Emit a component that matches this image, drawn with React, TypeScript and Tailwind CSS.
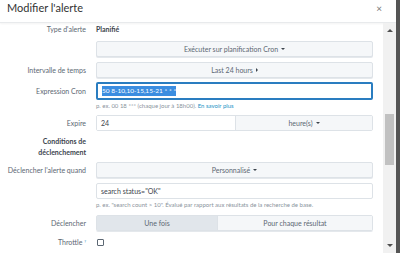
const font = { fontFamily: "Lato, 'Open Sans', sans-serif" };

function Label({ children, bold }: { children: React.ReactNode; bold?: boolean }) {
  return (
    <div className={`w-[86px] shrink-0 text-right text-[7px] ${bold ? "font-bold text-[#3c444d]" : "text-[#5c6773]"}`}>
      {children}
    </div>
  );
}

function Caret({ right }: { right?: boolean }) {
  return right ? (
    <span className="ml-[3px] inline-block h-0 w-0 border-y-[2px] border-l-[2.5px] border-y-transparent border-l-[#3c444d]" />
  ) : (
    <span className="ml-[3px] inline-block h-0 w-0 border-x-[2px] border-t-[2.5px] border-x-transparent border-t-[#3c444d]" />
  );
}

function Btn({ children, right }: { children: React.ReactNode; right?: boolean }) {
  return (
    <div className="flex h-[16px] w-[277px] items-center justify-center rounded-[2px] border border-[#dde2e7] bg-[#f5f7f9] text-[7px] text-[#5c6773] shadow-[0_1px_0_#e4e8ec]">
      {children}
      <Caret right={right} />
    </div>
  );
}

export default function App() {
  return (
    <div className="flex h-[253px] w-[400px] overflow-hidden bg-[#555]" style={font}>
      <div className="flex w-[396px] flex-col bg-white">
        {/* header */}
        <div className="flex h-[23px] shrink-0 items-start justify-between border-b border-[#e8eaec] px-[7px] pt-[1px] shadow-[0_1px_2px_rgba(0,0,0,0.05)]">
          <div className="text-[11px] leading-[13px] text-[#333]">Modifier l'alerte</div>
          <div className="mr-[7px] text-[10px] leading-[14px] text-[#777]">×</div>
        </div>

        <div className="flex min-h-0 flex-1">
          {/* body */}
          <div className="flex w-[383px] flex-col">
            <div className="flex h-[12px] items-center gap-[10px]">
              <Label>Type d'alerte</Label>
              <div className="text-[7px] font-bold text-[#3c444d]">Planifié</div>
            </div>

            <div className="mt-[6px] flex items-center gap-[10px]">
              <Label>{""}</Label>
              <Btn>Exécuter sur planification Cron</Btn>
            </div>

            <div className="mt-[5px] flex items-center gap-[10px]">
              <Label>Intervalle de temps</Label>
              <Btn right>Last 24 hours</Btn>
            </div>

            <div className="mt-[4px] flex items-center gap-[10px]">
              <Label>Expression Cron</Label>
              <div className="flex h-[18px] w-[277px] items-center rounded-[2px] border-2 border-[#2a7dc0] px-[4px] text-[6.5px]">
                <span className="bg-[#3b8de0] text-white">50 8-10,10-15,15-21 * * *</span>
              </div>
            </div>
            <div className="flex h-[10px] items-center gap-[10px]">
              <Label>{""}</Label>
              <div className="text-[6px] text-[#8a939c]">
                p. ex. 00 18 *** (chaque jour à 18h00). <span className="text-[#1e93c6]">En savoir plus</span>
              </div>
            </div>

            <div className="mt-[5px] flex items-center gap-[10px]">
              <Label>Expire</Label>
              <div className="flex h-[16px] w-[277px] rounded-[2px] border border-[#dde2e7] text-[7px]">
                <div className="flex w-[138px] items-center bg-white px-[4px] text-[#3c444d]">24</div>
                <div className="flex flex-1 items-center justify-center border-l border-[#dde2e7] bg-[#f5f7f9] text-[#5c6773]">
                  heure(s)
                  <Caret />
                </div>
              </div>
            </div>

            <div className="mt-[5px] flex gap-[10px]">
              <div className="w-[86px] shrink-0 text-right text-[7px] font-bold leading-[11px] text-[#3c444d]">
                Conditions de
                <br />
                déclenchement
              </div>
            </div>

            <div className="mt-[4px] flex items-center gap-[10px]">
              <Label>Déclencher l'alerte quand</Label>
              <Btn>Personnalisé</Btn>
            </div>

            <div className="mt-[5px] flex items-center gap-[10px]">
              <Label>{""}</Label>
              <div className="flex h-[16px] w-[277px] items-center rounded-[2px] border border-[#dde2e7] px-[4px] text-[7px] text-[#3c444d]">
                search status="OK"
              </div>
            </div>
            <div className="flex h-[10px] items-center gap-[10px]">
              <Label>{""}</Label>
              <div className="text-[6px] text-[#8a939c]">
                p. ex. "search count &gt; 10". Évalué par rapport aux résultats de la recherche de base.
              </div>
            </div>

            <div className="mt-[6px] flex items-center gap-[10px]">
              <Label>Déclencher</Label>
              <div className="flex h-[16px] w-[277px] rounded-[2px] border border-[#dde2e7] text-[7px] text-[#5c6773] shadow-[0_1px_0_#e4e8ec]">
                <div className="flex w-[120px] items-center justify-center bg-[#e1e6eb]">Une fois</div>
                <div className="flex flex-1 items-center justify-center border-l border-[#dde2e7] bg-[#f5f7f9]">
                  Pour chaque résultat
                </div>
              </div>
            </div>

            <div className="mt-[6px] flex h-[10px] items-center gap-[10px]">
              <Label>
                Throttle <sup className="text-[4px] text-[#1e93c6]">?</sup>
              </Label>
              <div className="ml-[1px] h-[7px] w-[7px] rounded-[1px] border border-[#5c6773] bg-white" />
            </div>
          </div>

          {/* scrollbar */}
          <div className="flex w-[13px] flex-col items-center bg-[#f1f1f1]">
            <div className="mt-[6px] h-0 w-0 border-x-[3px] border-b-[3px] border-x-transparent border-b-[#505050]" />
            <div className="mt-[82px] h-[51px] w-[9px] bg-[#c1c1c1]" />
            <div className="mt-auto mb-[6px] h-0 w-0 border-x-[3px] border-t-[3px] border-x-transparent border-t-[#505050]" />
          </div>
        </div>
      </div>
    </div>
  );
}
